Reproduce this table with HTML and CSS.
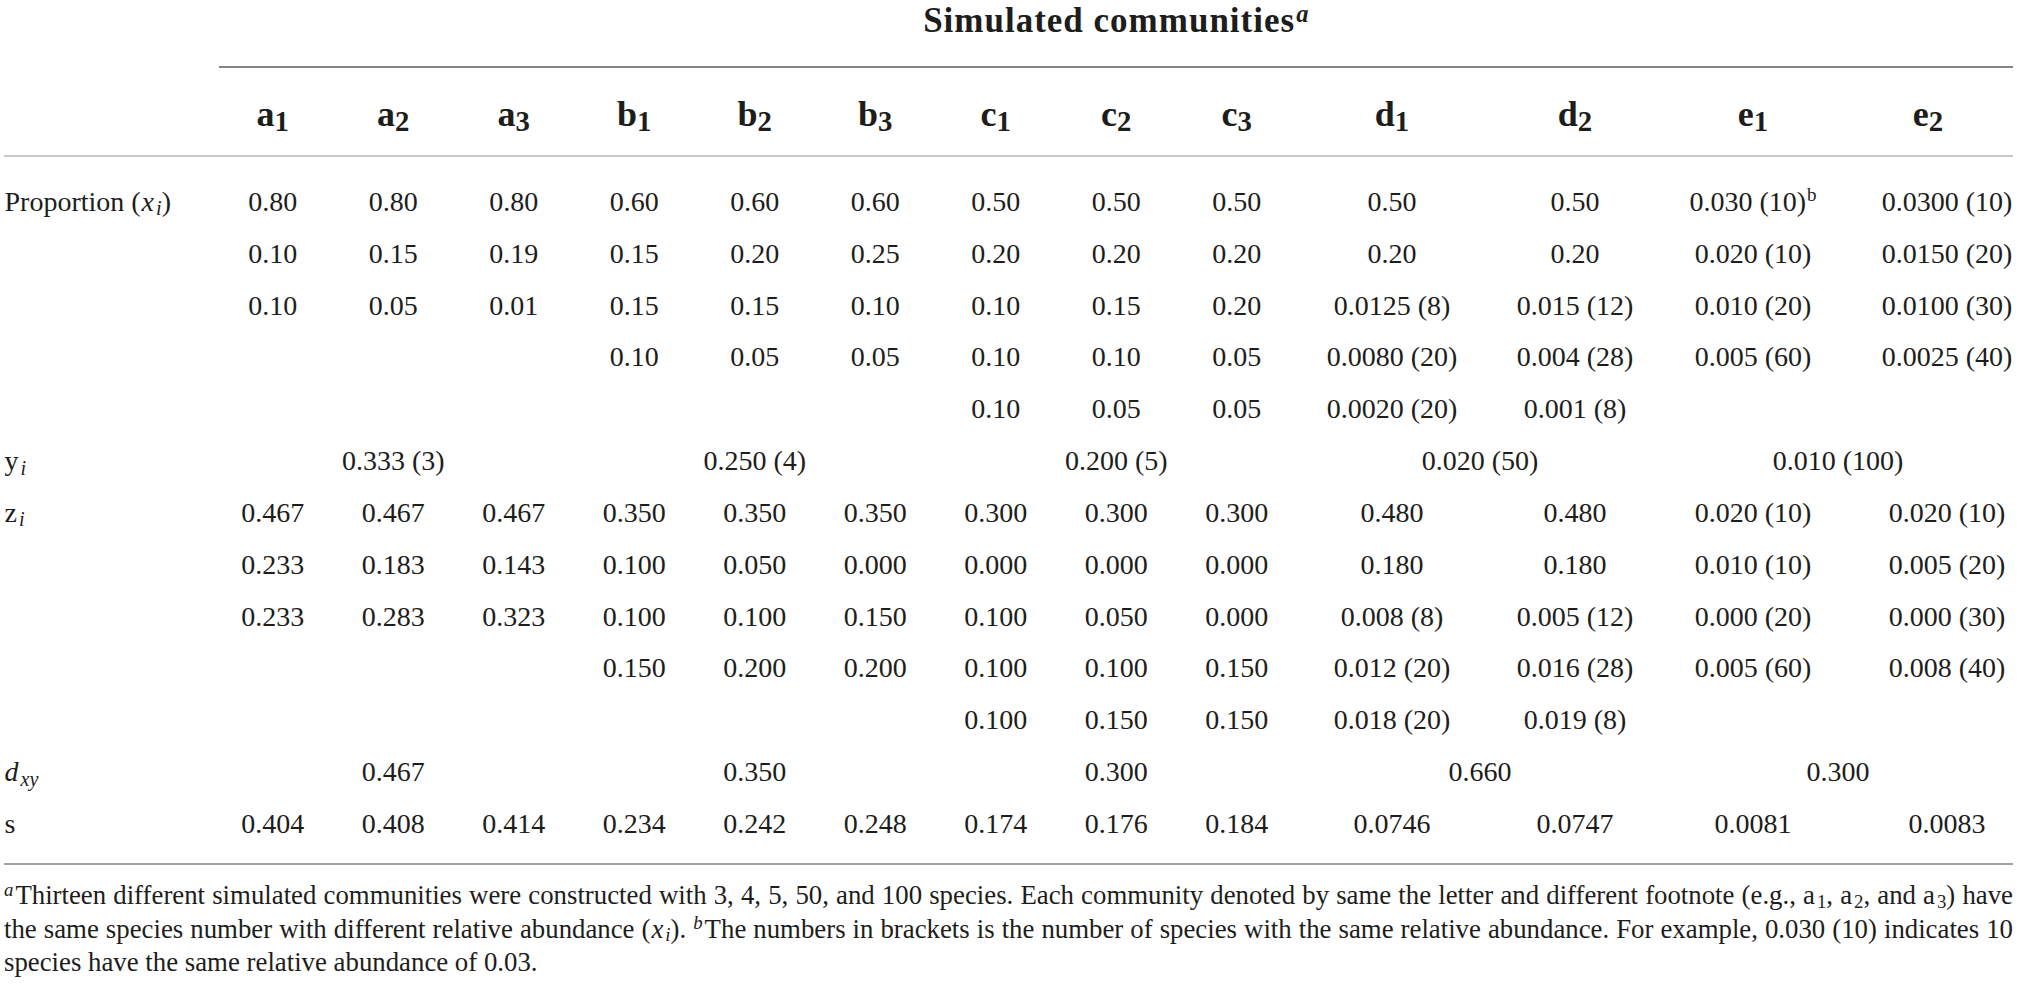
FILE: index.html
```html
<!DOCTYPE html>
<html lang="en">
<head>
<meta charset="utf-8">
<title>Simulated communities</title>
<link rel="stylesheet" href="styles.css">
</head>
<body>
<div class="page">
<table class="sim">
  <colgroup>
    <col class="c-label">
    <col class="c-n" span="9">
    <col class="c-d1">
    <col class="c-d2">
    <col class="c-e1">
    <col class="c-e2">
  </colgroup>
  <thead>
    <tr class="title-row">
      <th class="blank"></th>
      <th colspan="13" class="title-cell"><div class="title">Simulated communities<sup>a</sup></div></th>
    </tr>
    <tr class="head-row">
      <th></th>
      <th>a<sub>1</sub></th><th>a<sub>2</sub></th><th>a<sub>3</sub></th>
      <th>b<sub>1</sub></th><th>b<sub>2</sub></th><th>b<sub>3</sub></th>
      <th>c<sub>1</sub></th><th>c<sub>2</sub></th><th>c<sub>3</sub></th>
      <th>d<sub>1</sub></th><th>d<sub>2</sub></th>
      <th>e<sub>1</sub></th><th class="e2">e<sub>2</sub></th>
    </tr>
  </thead>
  <tbody>
    <tr class="first">
      <td class="label">Proportion (<i class="var">x</i><sub class="iv">i</sub>)</td>
      <td>0.80</td><td>0.80</td><td>0.80</td><td>0.60</td><td>0.60</td><td>0.60</td><td>0.50</td><td>0.50</td><td>0.50</td><td>0.50</td><td>0.50</td><td>0.030 (10)<sup class="fn">b</sup></td><td class="e2">0.0300 (10)</td>
    </tr>
    <tr>
      <td class="label"></td>
      <td>0.10</td><td>0.15</td><td>0.19</td><td>0.15</td><td>0.20</td><td>0.25</td><td>0.20</td><td>0.20</td><td>0.20</td><td>0.20</td><td>0.20</td><td>0.020 (10)</td><td class="e2">0.0150 (20)</td>
    </tr>
    <tr>
      <td class="label"></td>
      <td>0.10</td><td>0.05</td><td>0.01</td><td>0.15</td><td>0.15</td><td>0.10</td><td>0.10</td><td>0.15</td><td>0.20</td><td>0.0125 (8)</td><td>0.015 (12)</td><td>0.010 (20)</td><td class="e2">0.0100 (30)</td>
    </tr>
    <tr>
      <td class="label"></td>
      <td></td><td></td><td></td><td>0.10</td><td>0.05</td><td>0.05</td><td>0.10</td><td>0.10</td><td>0.05</td><td>0.0080 (20)</td><td>0.004 (28)</td><td>0.005 (60)</td><td class="e2">0.0025 (40)</td>
    </tr>
    <tr>
      <td class="label"></td>
      <td></td><td></td><td></td><td></td><td></td><td></td><td>0.10</td><td>0.05</td><td>0.05</td><td>0.0020 (20)</td><td>0.001 (8)</td><td></td><td class="e2"></td>
    </tr>
    <tr>
      <td class="label">y<sub class="iv">i</sub></td>
      <td colspan="3">0.333 (3)</td><td colspan="3">0.250 (4)</td><td colspan="3">0.200 (5)</td><td colspan="2">0.020 (50)</td><td colspan="2">0.010 (100)</td>
    </tr>
    <tr>
      <td class="label">z<sub class="iv">i</sub></td>
      <td>0.467</td><td>0.467</td><td>0.467</td><td>0.350</td><td>0.350</td><td>0.350</td><td>0.300</td><td>0.300</td><td>0.300</td><td>0.480</td><td>0.480</td><td>0.020 (10)</td><td class="e2">0.020 (10)</td>
    </tr>
    <tr>
      <td class="label"></td>
      <td>0.233</td><td>0.183</td><td>0.143</td><td>0.100</td><td>0.050</td><td>0.000</td><td>0.000</td><td>0.000</td><td>0.000</td><td>0.180</td><td>0.180</td><td>0.010 (10)</td><td class="e2">0.005 (20)</td>
    </tr>
    <tr>
      <td class="label"></td>
      <td>0.233</td><td>0.283</td><td>0.323</td><td>0.100</td><td>0.100</td><td>0.150</td><td>0.100</td><td>0.050</td><td>0.000</td><td>0.008 (8)</td><td>0.005 (12)</td><td>0.000 (20)</td><td class="e2">0.000 (30)</td>
    </tr>
    <tr>
      <td class="label"></td>
      <td></td><td></td><td></td><td>0.150</td><td>0.200</td><td>0.200</td><td>0.100</td><td>0.100</td><td>0.150</td><td>0.012 (20)</td><td>0.016 (28)</td><td>0.005 (60)</td><td class="e2">0.008 (40)</td>
    </tr>
    <tr>
      <td class="label"></td>
      <td></td><td></td><td></td><td></td><td></td><td></td><td>0.100</td><td>0.150</td><td>0.150</td><td>0.018 (20)</td><td>0.019 (8)</td><td></td><td class="e2"></td>
    </tr>
    <tr>
      <td class="label"><i>d</i><sub class="iv">xy</sub></td>
      <td colspan="3">0.467</td><td colspan="3">0.350</td><td colspan="3">0.300</td><td colspan="2">0.660</td><td colspan="2">0.300</td>
    </tr>
    <tr class="last">
      <td class="label">s</td>
      <td>0.404</td><td>0.408</td><td>0.414</td><td>0.234</td><td>0.242</td><td>0.248</td><td>0.174</td><td>0.176</td><td>0.184</td><td>0.0746</td><td>0.0747</td><td>0.0081</td><td class="e2">0.0083</td>
    </tr>
  </tbody>
</table>
<p class="note"><span class="seg"><sup class="it">a</sup>Thirteen different simulated communities were constructed with 3, 4, 5, 50, and 100 species. Each community denoted by same the letter and different footnote (e.g., a<sub>1</sub>, a<sub>2</sub>, and a<sub>3</sub>) have</span> <span class="seg">the same species number with different relative abundance (<i class="var">x</i><sub class="iv">i</sub>). <sup class="it">b</sup>The numbers in brackets is the number of species with the same relative abundance. For example, 0.030 (10) indicates 10</span> <span class="seg">species have the same relative abundance of 0.03.</span></p>
</div>
</body>
</html>
```

FILE: styles.css
```css
html, body {
  margin: 0;
  padding: 0;
  background: #ffffff;
}

body {
  color: #1d1d1b;
  font-family: "Liberation Serif", "Times New Roman", serif;
}

.page {
  width: 2009px;
  padding: 1px 0 0 4px;
}

.sim {
  width: 2009px;
  table-layout: fixed;
  border-collapse: separate;
  border-spacing: 0;
}

.c-label { width: 208.5px; }
.c-n { width: 120.5px; }
.c-d1 { width: 190px; }
.c-d2 { width: 176px; }
.c-e1 { width: 180px; }
.c-e2 { width: 170px; }

.sim th,
.sim td {
  padding: 0;
  text-align: center;
  white-space: nowrap;
  font-weight: normal;
}

.title-cell {
  vertical-align: top;
}

.title {
  margin-left: 6px;
  padding-bottom: 25px;
  border-bottom: 2px solid #858585;
  font-size: 35px;
  font-weight: bold;
  letter-spacing: 1px;
  line-height: 40px;
  text-align: center;
}

.title sup {
  font-style: italic;
  font-size: 70%;
  letter-spacing: 0;
  margin-left: 1px;
  vertical-align: 0.42em;
  line-height: 0;
}

.sim .head-row th {
  padding: 25px 0 20px;
  border-bottom: 2px solid #c8c8c8;
  font-size: 36px;
  font-weight: bold;
  line-height: 42px;
}

.head-row sub {
  font-size: 80%;
  vertical-align: -5px;
  line-height: 0;
}

.sim td {
  font-size: 28px;
  line-height: 51.83px;
}

.sim td.label {
  text-align: left;
  padding-left: 0.5px;
}

i.var {
  margin-left: 1px;
}

sub.iv {
  font-style: italic;
}

.sim td sub {
  font-size: 72%;
  margin-left: 2px;
  vertical-align: -0.22em;
  line-height: 0;
}

.sim td sup.fn {
  font-size: 68%;
  margin-left: 1px;
  vertical-align: 0.5em;
  line-height: 0;
}

.sim .e2 {
  padding-left: 38px;
}

.sim tr.first td {
  padding-top: 19px;
}

.sim tr.last td {
  padding-bottom: 13px;
  border-bottom: 2px solid #a3a3a3;
}

.note {
  margin: 14.4px 0 0;
  font-size: 26.8px;
  line-height: 33.6px;
  text-align: justify;
}

.note sup.it {
  font-style: italic;
  font-size: 70%;
  margin-right: 2px;
  vertical-align: 0.45em;
  line-height: 0;
}

.note sub {
  font-size: 70%;
  margin-left: 2px;
  vertical-align: -0.18em;
  line-height: 0;
}
```
